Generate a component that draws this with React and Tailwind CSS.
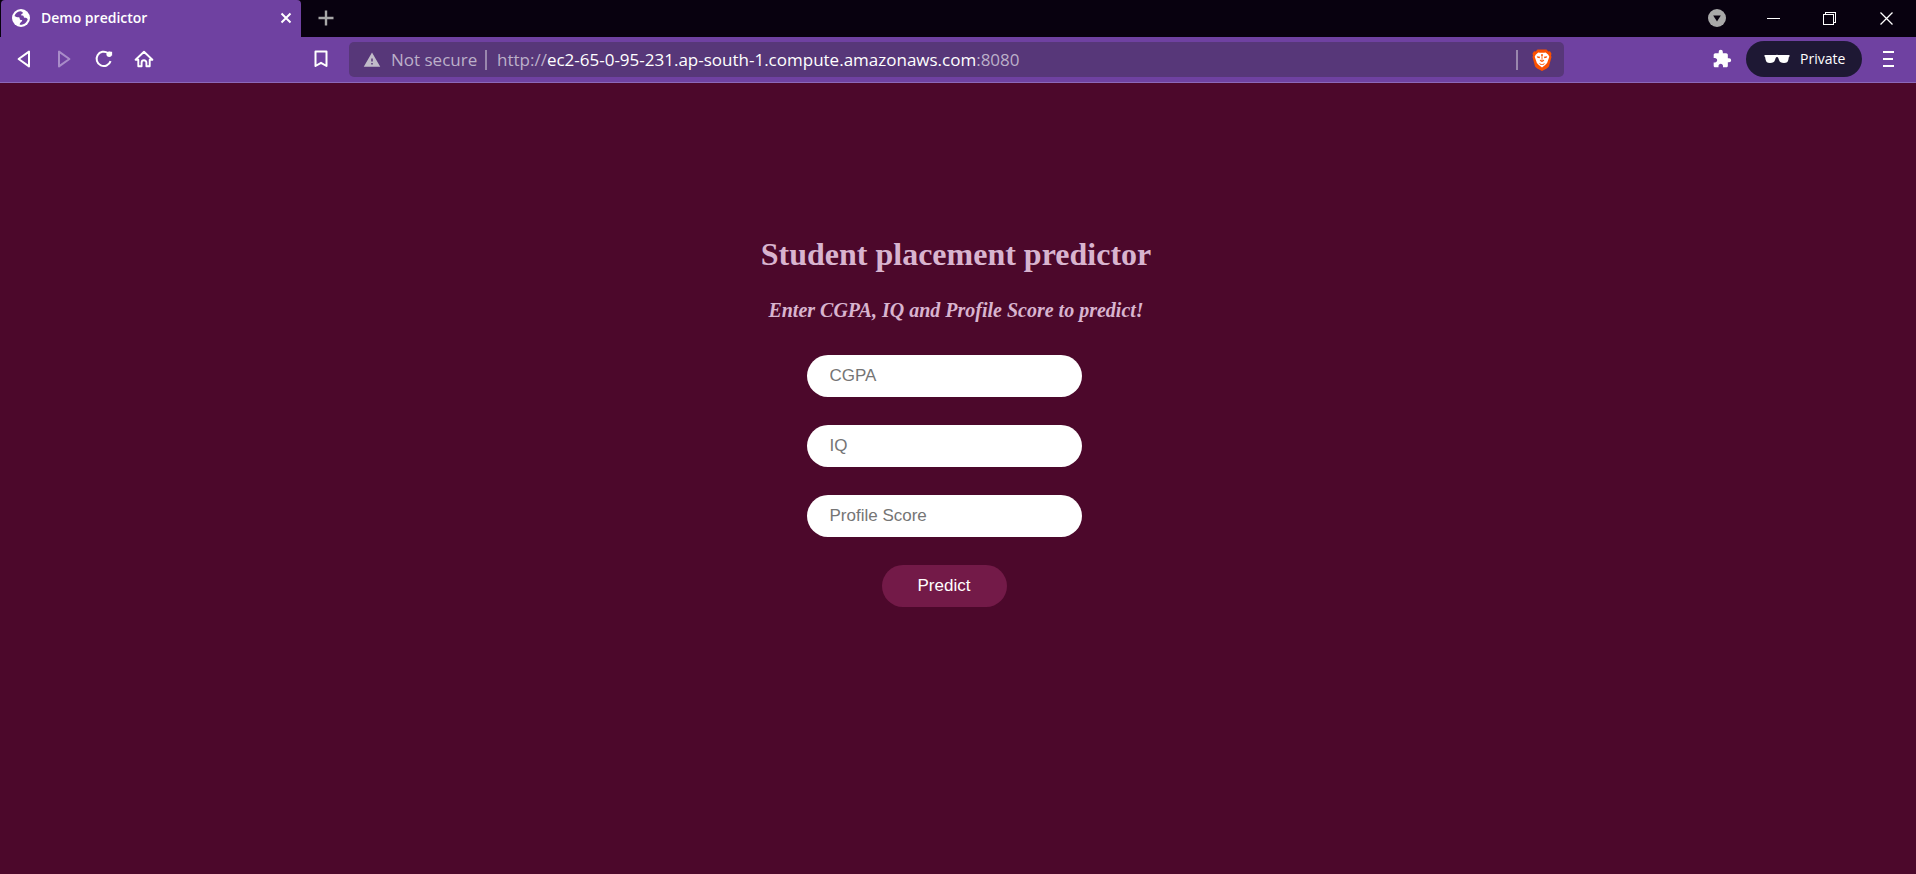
import { MdExtension, MdWarning } from "react-icons/md";

const UI_FONT = "font-['Open_Sans','Noto_Sans',sans-serif]";

function Stroke({ children, className = "" }) {
  return (
    <svg viewBox="0 0 20 20" className={`size-5 fill-none stroke-current stroke-2 ${className}`} aria-hidden="true">
      {children}
    </svg>
  );
}

function Globe() {
  return (
    <svg viewBox="0 0 18 18" className="size-[18px] shrink-0" aria-hidden="true">
      <circle cx="9" cy="9" r="9" fill="#fff" />
      <path
        d="M8.800 2.200C6.200 2.200 3.300 4 2.500 7c1.200 1 2.600 1.300 4 1.300 1 0 1.200.7 1.200 1.500 0 .9.800 1.200 1.800 1.200.8 0 .9.500.4 1.200l-1.300 1.300c-.5.500-.8 1-.9 2.200 3.600.6 7-1.700 8-5.400-.7-1.300-1.700-1.500-2.900-1.500-.7 0-.9-.4-1-1-.1-.9-.7-1.300-1.700-1.300-.8 0-1.200-.5-.8-1.100.4-.7 1.300-.6 1.600-1.400.2-.7-.7-1.100-2.100-1.800z"
        fill="#6f41a1"
      />
    </svg>
  );
}

function LionShield() {
  return (
    <svg viewBox="0 0 20 22" className="h-[22px] w-5" aria-hidden="true">
      <path d="M5.500 0.500h9l1.800 1.900 1.700-.2 1.500 2.500-.5 1.700.5 1.500-2.300 8.600c-.4 1.300-1.300 2.100-2.400 2.900L10 22l-4.800-2.600c-1.100-.8-2-1.600-2.400-2.900L.5 7.900 1 6.400.5 4.700 2 2.200l1.700.2z" fill="#fb5100" />
      <path d="M6.300 3.400L8 3.800h4l1.700-.4 2.600 2.300 1 2-1.500 4.200-.7 2.200-2.200 2.100L10 18.400l-2.900-2.200-2.200-2.100-.7-2.200L2.700 7.700l1-2z" fill="#fff" />
      <path d="M4.800 7.200l3.300.6-.5 1.400-2.200-.5zM15.200 7.200l-3.300.6.5 1.400 2.200-.5zM9 5.200h2l-.4 2.600.6 2.900 1.200 1.100L10 13l-2.400-1.200 1.200-1.100.6-2.900zM6.700 14l3.300 1.200L13.300 14l-2.100 2.100L10 15.700l-1.200.4z" fill="#fb5100" />
      <path d="M9.700 7h.6l.4 4-.7.700-.7-.7z" fill="#fff" />
    </svg>
  );
}

function TabStrip() {
  return (
    <header className="flex h-[37px] items-stretch bg-[#08010f] pl-px">
      <div className="flex w-[300px] items-center rounded-t bg-[#6f41a1] pb-px pl-[11px] pr-2">
        <Globe />
        <span className="flex-1 pl-[11px] text-sm font-semibold text-white">Demo predictor</span>
        <button type="button" aria-label="Close tab" className="text-white">
          <svg viewBox="0 0 14 14" className="size-3.5 stroke-current stroke-2" aria-hidden="true">
            <path d="M2.500 2.500l9 9M11.500 2.500l-9 9" />
          </svg>
        </button>
      </div>
      <button type="button" aria-label="New tab" className="flex w-[50px] items-center justify-center pb-px text-[#a8a8a8]">
        <svg viewBox="0 0 16 16" className="size-4 stroke-current" strokeWidth="2.400" aria-hidden="true">
          <path d="M8 0.500v15M0.500 8h15" />
        </svg>
      </button>
      <div className="ml-auto flex items-stretch pb-px pr-px text-white">
        <button type="button" aria-label="Search tabs" className="flex w-14 items-center justify-center">
          <svg viewBox="0 0 18 18" className="size-[18px]" aria-hidden="true">
            <circle cx="9" cy="9" r="9" fill="#a9a9a9" />
            <path d="M5.200 6.400h7.600L9 12.400z" fill="#08010f" />
          </svg>
        </button>
        <button type="button" aria-label="Minimize" className="flex w-14 items-center justify-center">
          <svg viewBox="0 0 13 13" className="size-[13px]" shapeRendering="crispEdges" aria-hidden="true">
            <path d="M0 6.500h13" stroke="#fff" />
          </svg>
        </button>
        <button type="button" aria-label="Restore" className="flex w-14 items-center justify-center">
          <svg viewBox="0 0 13 13" className="size-[13px] fill-none" shapeRendering="crispEdges" aria-hidden="true">
            <path d="M0.500 2.500h10v10h-10zM2.500 2.500v-2h10v10h-2" stroke="#fff" />
          </svg>
        </button>
        <button type="button" aria-label="Close window" className="flex w-[58px] items-center justify-center">
          <svg viewBox="0 0 13 13" className="size-[13px]" aria-hidden="true">
            <path d="M0.500 0.500l12 12M12.500 0.500l-12 12" stroke="#fff" strokeWidth="1.300" />
          </svg>
        </button>
      </div>
    </header>
  );
}

function Toolbar() {
  return (
    <nav className="flex h-[46px] items-center border-b border-[#8c68b8] bg-[#6f41a1] text-white">
      <div className="flex w-[349px] items-center gap-5 pb-px pl-3.5">
        <button type="button" aria-label="Back">
          <Stroke><path d="M15 2.600v14.800L4.600 10z" strokeLinejoin="round" /></Stroke>
        </button>
        <button type="button" aria-label="Forward" className="text-[#a98cc9]">
          <Stroke><path d="M5 2.600v14.800L15.400 10z" strokeLinejoin="round" /></Stroke>
        </button>
        <button type="button" aria-label="Reload">
          <Stroke>
            <path d="M16.600 12.200A7.200 7.200 0 1 1 14 4" />
            <circle cx="15.200" cy="5.300" r="2.700" className="fill-current stroke-none" />
            <path d="M14.500 2.700h3.600v4z" className="fill-current stroke-none" />
          </Stroke>
        </button>
        <button type="button" aria-label="Home">
          <Stroke>
            <path d="M1.600 10.800L10 2.800l8.400 8h-2.700v6.500h-3.300v-3.600a2.400 2.400 0 0 0-4.800 0v3.600H4.300v-6.500z" strokeLinejoin="round" strokeWidth="1.900" />
          </Stroke>
        </button>
        <button type="button" aria-label="Bookmark" className="ml-auto mr-[18px]">
          <Stroke><path d="M4.500 2.500h11v14.500L10 13.800 4.500 17z" strokeLinejoin="round" /></Stroke>
        </button>
      </div>
      <div className="flex h-[35px] min-w-0 flex-1 items-center rounded-[5px] bg-[#573779] pl-3.5 pr-3 text-[17px]">
        <MdWarning className="size-[18px] shrink-0 text-[#c1bcc9]" aria-hidden="true" />
        <span className="ml-2.5 w-[84px] whitespace-nowrap text-[#bcb0c9]">Not secure</span>
        <span className="ml-2.5 h-5 w-0.5 bg-[#9a87ae]" />
        <span className="ml-2.5 flex-1 truncate text-[#bcb0c9]">
          http://<span className="text-white">ec2-65-0-95-231.ap-south-1.compute.amazonaws.com</span>:8080
        </span>
        <span className="mr-3.5 h-5 w-0.5 bg-[#9a87ae]" />
        <button type="button" aria-label="Brave Shields" className="flex">
          <LionShield />
        </button>
      </div>
      <div className="flex w-[352px] items-center justify-end pb-0.5 pr-[22px]">
        <button type="button" aria-label="Extensions">
          <MdExtension className="size-5" aria-hidden="true" />
        </button>
        <button type="button" className="ml-3.5 flex h-9 w-[116px] items-center rounded-full bg-[#1e1834] pl-[18px] text-sm">
          <svg viewBox="0 0 26 10" className="h-2.5 w-[26px] fill-current" aria-hidden="true">
            <path d="M0.500 1h11.200q1.300-.5 2.600 0h11.200v1.500c-1 .5-.7 1.500-1.200 3.500-.5 2-1.300 3-4.300 3s-4.200-.8-5-3c-.5-1.500-.7-3-2-3s-1.500 1.500-2 3c-.8 2.200-2 3-5 3s-3.800-1-4.300-3c-.5-2-.2-3-1.200-3.500z" />
          </svg>
          <span className="ml-2.5">Private</span>
        </button>
        <button type="button" aria-label="Menu" className="ml-5">
          <svg viewBox="0 0 12 18" className="h-[18px] w-3 stroke-current stroke-2" aria-hidden="true">
            <path d="M1 2h11M1 9h10M1 16h11" />
          </svg>
        </button>
      </div>
    </nav>
  );
}

const FIELDS = ["CGPA", "IQ", "Profile Score"];

export default function App() {
  return (
    <div className="flex min-h-screen flex-col bg-[#4c082b]">
      <div className={UI_FONT}>
        <TabStrip />
        <Toolbar />
      </div>
      <main className="flex flex-1 flex-col items-center pr-1 pt-[153px] text-center font-['Liberation_Serif',serif] text-[#d8b4cf]">
        <h1 className="text-[32px] font-bold leading-9">Student placement predictor</h1>
        <h2 className="mt-[26px] text-xl font-bold italic leading-6">Enter CGPA, IQ and Profile Score to predict!</h2>
        <form className="mt-[33px] flex flex-col items-center gap-7 pr-6 font-['Liberation_Sans',sans-serif] text-[17px]" onSubmit={(e) => e.preventDefault()}>
          {FIELDS.map((name) => (
            <input
              key={name}
              type="text"
              aria-label={name}
              placeholder={name}
              className="h-[42px] w-[275px] rounded-full bg-white px-[23px] text-black placeholder:text-[#757575]"
            />
          ))}
          <button type="submit" className="h-[42px] w-[125px] rounded-full bg-[#731a48] text-white">
            Predict
          </button>
        </form>
      </main>
    </div>
  );
}
